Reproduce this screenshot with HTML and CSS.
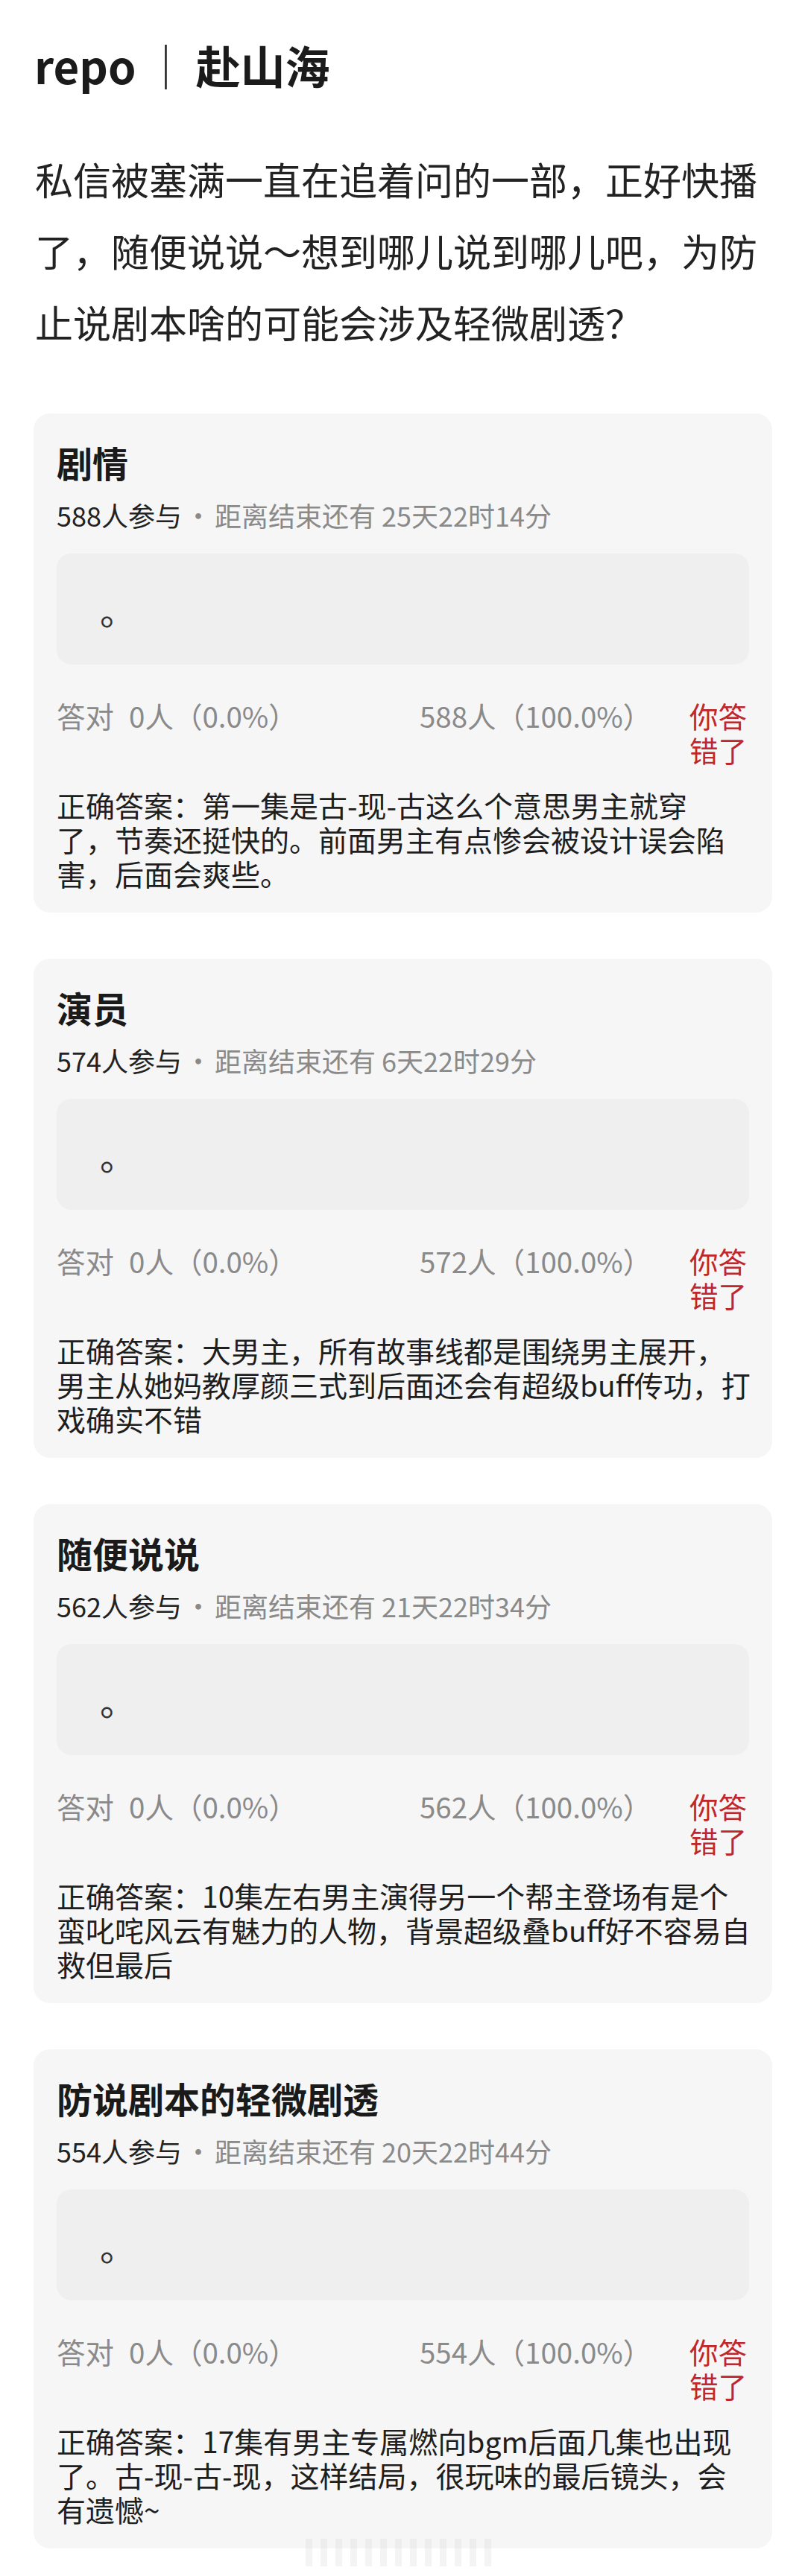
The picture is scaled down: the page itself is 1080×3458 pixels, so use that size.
FILE: index.html
```html
<!doctype html>
<html>
  <head>
    <meta charset="utf-8">
    <title>repo｜赴山海</title>
    <link rel="stylesheet" href="styles.css">
  </head>
  <body>
    <div class="page">
      <h1 class="title">repo<span class="sep">｜</span>赴山海</h1>
      <p class="intro">私信被塞满一直在追着问的一部，正好快播了，随便说说～想到哪儿说到哪儿吧，为防止说剧本啥的可能会涉及轻微剧透？</p>

      <div class="cards">
        <div class="card">
          <h2 class="card-title">剧情</h2>
          <div class="meta"><span class="count">588人参与</span><span class="dot">·</span>距离结束还有 25天22时14分</div>
          <div class="option">。</div>
          <div class="result">
            <span class="right"><span class="label">答对</span>0人（0.0%）</span>
            <span class="wrong">588人（100.0%）</span>
            <span class="mine">你答错了</span>
          </div>
          <p class="answer">正确答案：第一集是古-现-古这么个意思男主就穿<br>了，节奏还挺快的。前面男主有点惨会被设计误会陷<br>害，后面会爽些。</p>
        </div>

        <div class="card">
          <h2 class="card-title">演员</h2>
          <div class="meta"><span class="count">574人参与</span><span class="dot">·</span>距离结束还有 6天22时29分</div>
          <div class="option">。</div>
          <div class="result">
            <span class="right"><span class="label">答对</span>0人（0.0%）</span>
            <span class="wrong">572人（100.0%）</span>
            <span class="mine">你答错了</span>
          </div>
          <p class="answer">正确答案：大男主，所有故事线都是围绕男主展开，<br>男主从她妈教厚颜三式到后面还会有超级buff传功，打<br>戏确实不错</p>
        </div>

        <div class="card">
          <h2 class="card-title">随便说说</h2>
          <div class="meta"><span class="count">562人参与</span><span class="dot">·</span>距离结束还有 21天22时34分</div>
          <div class="option">。</div>
          <div class="result">
            <span class="right"><span class="label">答对</span>0人（0.0%）</span>
            <span class="wrong">562人（100.0%）</span>
            <span class="mine">你答错了</span>
          </div>
          <p class="answer">正确答案：10集左右男主演得另一个帮主登场有是个<br>蛮叱咤风云有魅力的人物，背景超级叠buff好不容易自<br>救但最后</p>
        </div>

        <div class="card">
          <h2 class="card-title">防说剧本的轻微剧透</h2>
          <div class="meta"><span class="count">554人参与</span><span class="dot">·</span>距离结束还有 20天22时44分</div>
          <div class="option">。</div>
          <div class="result">
            <span class="right"><span class="label">答对</span>0人（0.0%）</span>
            <span class="wrong">554人（100.0%）</span>
            <span class="mine">你答错了</span>
          </div>
          <p class="answer">正确答案：17集有男主专属燃向bgm后面几集也出现<br>了。古-现-古-现，这样结局，很玩味的最后镜头，会<br>有遗憾~</p>
        </div>
      </div>

      <div class="watermark"></div>
    </div>
  </body>
</html>
```

FILE: styles.css
```css
body {
  margin: 0;
  background: #fff;
  color: #222;
  font-family: "Noto Sans CJK SC", "Noto Sans", sans-serif;
}

.page {
  position: relative;
  padding: 47px 0 40px;
}

.title {
  margin: 0 47px 0 46px;
  font-size: 60px;
  line-height: 80px;
  font-weight: 700;
  color: #1b1b1b;
}
.title .sep {
  margin: 0 10px;
  font-weight: 400;
}

.intro {
  margin: 65px 47px 0 47px;
  font-size: 51px;
  line-height: 96px;
  color: #222;
}

.cards {
  display: flex;
  flex-direction: column;
  gap: 62px;
  margin: 75px 44px 0 45px;
}

.card {
  background: #f6f6f6;
  border-radius: 22px;
  padding: 35px 31px 30px;
}

.card-title {
  margin: 0;
  font-size: 48px;
  line-height: 60px;
  font-weight: 700;
  color: #1a1a1a;
}

.meta {
  margin-top: 19px;
  font-size: 36px;
  line-height: 44px;
  color: #8a8a8a;
}
.meta .count { color: #222; }
.meta .dot {
  display: inline-block;
  width: 44px;
  text-align: center;
}

.option {
  display: flex;
  align-items: center;
  height: 149px;
  margin-top: 30px;
  padding-left: 58px;
  background: #efefef;
  border-radius: 20px;
  font-size: 48px;
  color: #333;
}

.result {
  display: flex;
  margin-top: 45px;
  font-size: 38.5px;
  line-height: 46px;
  color: #8a8a8a;
}
.result .right { width: 487px; }
.result .label { margin-right: 20px; }
.result .wrong { flex: 1; }
.result .mine {
  width: 80px;
  color: #c0272d;
}

.answer {
  margin: 28px 0 0;
  font-size: 39px;
  line-height: 46px;
  color: #1e1e1e;
  white-space: nowrap;
}

.watermark {
  position: absolute;
  left: 410px;
  top: 3408px;
  width: 260px;
  height: 37px;
  background: repeating-linear-gradient(90deg, rgba(210,210,210,0.25) 0 9px, transparent 9px 20px);
}
```
